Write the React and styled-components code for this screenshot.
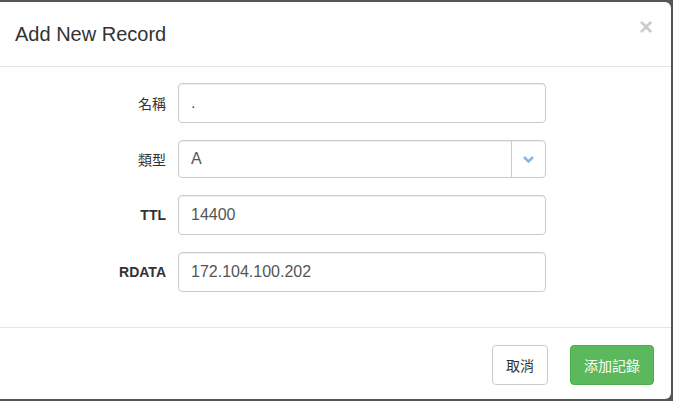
import React from 'react';
import styled, {createGlobalStyle} from 'styled-components';

const GlobalStyle = createGlobalStyle`
  html, body {
    margin: 0;
    padding: 0;
    background: #555;
    font-family: "Liberation Sans", Arial, "Noto Sans CJK TC", sans-serif;
    overflow: hidden;
  }
`;

const Page = styled.div`
  height: 401px;
  padding-top: 2px;
  box-sizing: border-box;
`;

const Modal = styled.div`
  display: flex;
  flex-direction: column;
  width: 671px;
  height: 397px;
  background: #fff;
  border-radius: 0 6px 6px 0;
  color: #333;
`;

const Header = styled.div`
  display: flex;
  justify-content: space-between;
  align-items: center;
  height: 64px;
  padding: 0 15px;
  border-bottom: 1px solid #e5e5e5;
`;

const Title = styled.h4`
  margin: 0;
  font-size: 20px;
  font-weight: normal;
  color: #333;
`;

const Close = styled.span`
  align-self: flex-start;
  margin: 13px 3px 0 0;
  font-size: 24px;
  font-weight: bold;
  line-height: 1;
  color: #000;
  opacity: 0.2;
  text-shadow: 0 1px 0 #fff;
`;

const Body = styled.div`
  display: flex;
  flex-direction: column;
  gap: 17px;
  padding: 16px 0 35px;
`;

const Row = styled.div`
  display: grid;
  grid-template-columns: 166px 368px;
  column-gap: 12px;
  align-items: center;
`;

const Label = styled.label`
  text-align: right;
  font-size: 14px;
  font-weight: ${p => (p.$bold ? 'bold' : 'normal')};
  color: #333;
`;

const Input = styled.input`
  box-sizing: border-box;
  width: 100%;
  height: 40px;
  padding: 0 12px;
  border: 1px solid #ccc;
  border-radius: 4px;
  font-family: inherit;
  font-size: 16px;
  color: #555;
  background: #fff;
  box-shadow: inset 0 1px 1px rgba(0, 0, 0, 0.075);
  outline: none;
`;

const Select = styled.div`
  box-sizing: border-box;
  display: flex;
  height: 38px;
  border: 1px solid #ccc;
  border-radius: 4px;
  box-shadow: inset 0 1px 1px rgba(0, 0, 0, 0.075);
`;

const SelectValue = styled.div`
  flex: 1;
  display: flex;
  align-items: center;
  padding: 0 12px;
  font-size: 16px;
  color: #555;
`;

const SelectArrow = styled.div`
  width: 33px;
  display: flex;
  align-items: center;
  justify-content: center;
  border-left: 1px solid #ccc;
`;

const Footer = styled.div`
  display: flex;
  justify-content: flex-end;
  gap: 22px;
  padding: 17px 17px 0 0;
  border-top: 1px solid #e5e5e5;
`;

const Button = styled.button`
  height: 40px;
  padding: 0 13px;
  border-radius: 4px;
  font-family: inherit;
  font-size: 14px;
  border: 1px solid ${p => (p.$primary ? '#4cae4c' : '#ccc')};
  background: ${p => (p.$primary ? '#5cb85c' : '#fff')};
  color: ${p => (p.$primary ? '#fff' : '#333')};
`;

const Chevron = () => (
  <svg width="11" height="7" viewBox="0 0 11 7">
    <polyline points="1,1 5.5,5.5 10,1" fill="none" stroke="#8db4da" strokeWidth="2.6"/>
  </svg>
);

const App = () => {
  return (
    <Page>
      <GlobalStyle/>
      <Modal>
        <Header>
          <Title>Add New Record</Title>
          <Close>×</Close>
        </Header>
        <Body>
          <Row>
            <Label>名稱</Label>
            <Input readOnly value="."/>
          </Row>
          <Row>
            <Label>類型</Label>
            <Select>
              <SelectValue>A</SelectValue>
              <SelectArrow><Chevron/></SelectArrow>
            </Select>
          </Row>
          <Row>
            <Label $bold>TTL</Label>
            <Input readOnly value="14400"/>
          </Row>
          <Row>
            <Label $bold>RDATA</Label>
            <Input readOnly value="172.104.100.202"/>
          </Row>
        </Body>
        <Footer>
          <Button>取消</Button>
          <Button $primary>添加記錄</Button>
        </Footer>
      </Modal>
    </Page>
  );
};

export default App;
